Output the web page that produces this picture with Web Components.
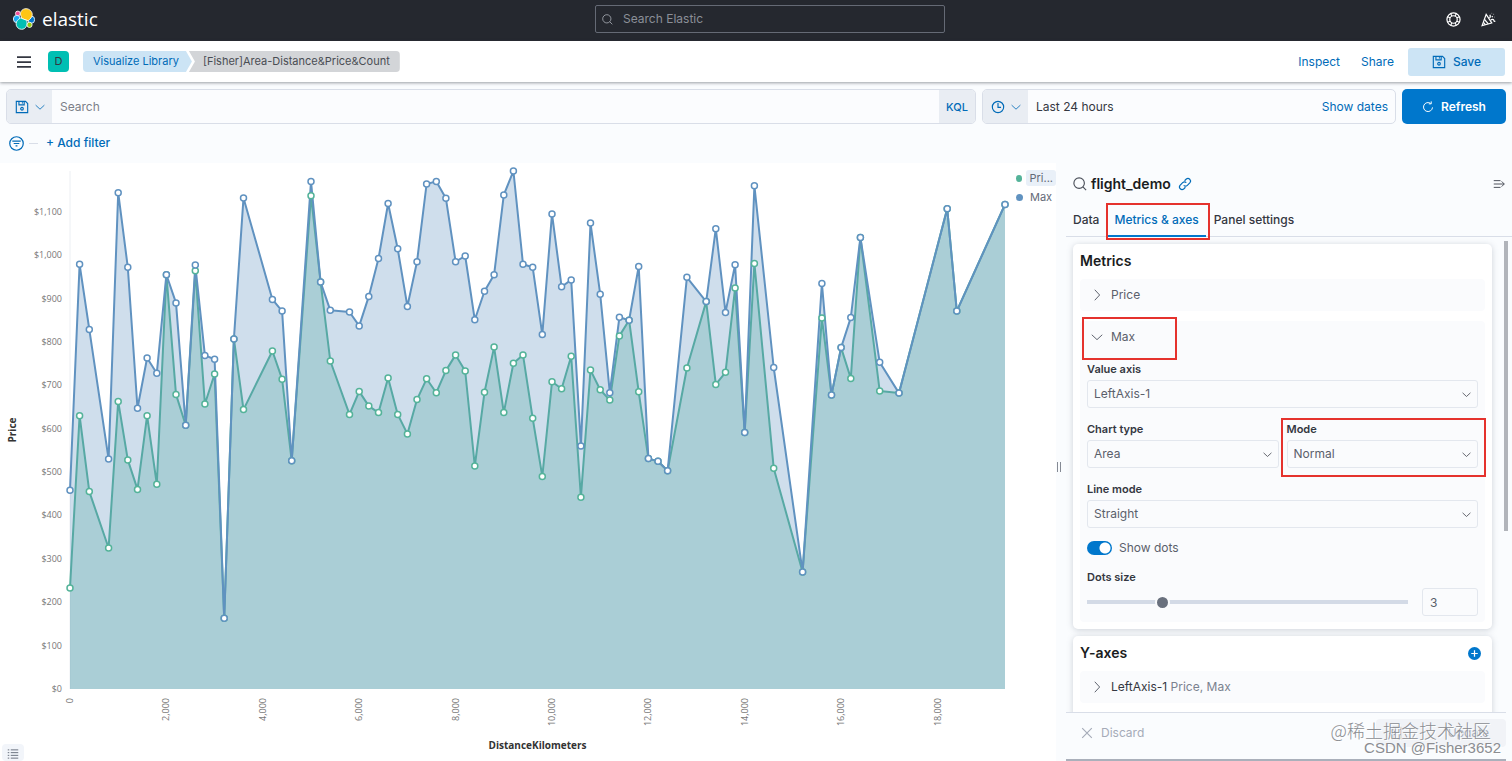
<!DOCTYPE html>
<html lang="en">
<head>
<meta charset="utf-8">
<meta name="viewport" content="width=device-width, initial-scale=1">
<title>Visualize Library - Elastic</title>
<style>
    html, body {
        height: 100%;
    }
    body {
        margin: 0;
        font-family: Inter, "Noto Sans CJK SC", sans-serif;
        font-size: 12px;
        line-height: 20px;
        color: #343741;
        --primary: #006bb8;
        --line: #d9dee8;
        --callout: #e5322d;
    }
</style>
</head>
<body>
<visualize-app></visualize-app>

<script>
const icons = {
    search: `<circle cx="7" cy="7" r="6"/><path d="M11.300 11.300l3.700 3.700"/>`,
    help: `<circle cx="8" cy="8" r="7"/><circle cx="8" cy="8" r="4"/><path d="M5 1.700l1.200 2.700M11 1.700l-1.200 2.700M5 14.300l1.200-2.700M11 14.300l-1.200-2.700M1.700 5l2.700 1.200M1.700 11l2.700-1.200M14.300 5l-2.700 1.200M14.300 11l-2.700-1.200"/>`,
    cheer: `<path d="M5.500 2.500L1.200 14.500l10.300-2.800z"/><path d="M3.800 8l4 4.600M2.600 11l2 2.400"/><path d="M9 6.500c1.200-.8 1-2.300.5-3.500M10.500 8.500c1.500-1.200 3-.8 3.200.4s.8 1.300 1.600.8M11.500 5.500l1-1M13.500 2.500h.4M11.500 1.500h.3M14.500 5.500h.3"/>`,
    save: `<path d="M1.500 1.500h10.500l2.500 2.500v10.500h-13z"/><path d="M4.500 1.500v4h6v-4M8.500 2.500v1.500"/><circle cx="8" cy="10" r="1.500"/>`,
    down: `<path d="M1 5l7 6.500L15 5"/>`,
    right: `<path d="M5 1l6.500 7L5 15"/>`,
    clock: `<circle cx="8" cy="8" r="6.500"/><path d="M8 3.500v5h3.500"/>`,
    refresh: `<path d="M11.500 3.200A6 6 0 1 0 14 8.500"/><path d="M12.300.5v3.300H9"/>`,
    filter: `<circle cx="8" cy="8" r="7.200"/><path d="M3.500 5.500h9M5 8h6M7 10.500h2"/>`,
    link: `<path d="M6.500 9.500a3 3 0 0 0 4.200 0l3-3a3 3 0 0 0-4.200-4.200L7.500 4.300"/><path d="M9.500 6.500a3 3 0 0 0-4.200 0l-3 3a3 3 0 0 0 4.200 4.200l2-2"/>`,
    menuRight: `<path d="M1 3.500h9M1 8h14M1 12.500h9M11.500 4.500L15 8l-3.500 3.500"/>`,
    menu: `<path d="M0 2.500h16M0 8h16M0 13.500h16" stroke-width="2"/>`,
    list: `<path d="M1 2.500h2M5 2.500h10M1 6.200h2M5 6.200h10M1 9.800h2M5 9.800h10M1 13.500h2M5 13.500h10"/>`,
    cross: `<path d="M2.500 2.500l11 11M13.500 2.500l-11 11"/>`,
    plus: `<circle cx="8" cy="8" r="8" fill="currentColor" stroke="none"/><path d="M8 4v8M4 8h8" stroke="#fff" stroke-width="1.500"/>`,
    apply: `<path d="M5.500 1.500h9v13h-9v-4M5.500 5.500v-4M1 8h8M6.500 5.500L9 8l-2.500 2.500"/>`
};

// [distance, max, price], the distance in steps of 200 km
const flights = [
    [0, 458, 233], [1, 979, 630], [2, 829, 455], [4, 530, 325], [5, 1144, 663],
    [6, 972, 528], [7, 647, 460], [8, 763, 630], [9, 728, 472], [10, 955, 955],
    [11, 890, 679], [12, 608, 608], [13, 977, 964], [14, 769, 657], [15, 760, 726],
    [16, 163, 163], [17, 807, 807], [18, 1132, 644], [21, 898, 779], [22, 871, 714],
    [23, 526, 526], [25, 1170, 1137], [26, 938, 938], [27, 873, 756], [29, 869, 633],
    [30, 837, 686], [31, 905, 652], [32, 992, 637], [33, 1119, 717], [34, 1015, 633],
    [35, 882, 588], [36, 985, 667], [37, 1164, 715], [38, 1170, 683], [39, 1131, 734],
    [40, 985, 770], [41, 998, 733], [42, 851, 514], [43, 917, 684], [44, 955, 788],
    [45, 1139, 637], [46, 1194, 751], [47, 979, 770], [48, 972, 624], [49, 817, 490],
    [50, 1095, 708], [51, 927, 692], [52, 943, 767], [53, 560, 442], [54, 1074, 735],
    [55, 910, 690], [56, 683, 666], [57, 857, 814], [58, 850, 850], [59, 974, 685],
    [60, 531, 531], [61, 525, 525], [62, 503, 503], [64, 949, 740], [66, 893, 893],
    [67, 1061, 702], [68, 868, 730], [69, 978, 924], [70, 591, 591], [71, 1160, 981],
    [73, 741, 509], [76, 270, 270], [78, 935, 855], [79, 678, 678], [80, 787, 787],
    [81, 856, 716], [82, 1041, 1041], [84, 753, 687], [86, 682, 682], [91, 1107, 1107],
    [92, 871, 871], [97, 1117, 1117]
];

const baseStyle = `
    * {
        box-sizing: border-box;
    }
    button, input, select {
        margin: 0;
        padding: 0;
        border: 0;
        background: none;
        font: inherit;
        color: inherit;
        outline: none;
    }
    a {
        text-decoration: none;
        color: inherit;
    }
`;

class UiIcon extends HTMLElement{
    connectedCallback(){
        if (this.shadowRoot) return;
        this.attachShadow({mode: "open"}).innerHTML = `
        <style>
            :host {
                display: block;
                flex: none;
                width: 14px;
                height: 14px;
            }
            svg {
                display: block;
                width: 100%;
                height: 100%;
                overflow: visible;
            }
        </style>
        <svg viewBox="0 0 16 16" fill="none" stroke="currentColor" stroke-width="1.3" aria-hidden="true">${icons[this.getAttribute("name")]}</svg>
        `;
    }
}

class ElasticHeader extends HTMLElement{
    constructor(){
        super();
        this.attachShadow({mode: "open"}).innerHTML = `
        <style>
            ${baseStyle}
            :host {
                display: grid;
                grid-template-columns: 582fr 350px 551fr;
                align-items: center;
                box-sizing: border-box;
                height: 41px;
                padding: 0 16px 3px 13px;
                background: #25282f;
                color: #fff;
            }
            .brand {
                display: flex;
                align-items: center;
                gap: 7px;
                font: 19px/24px "Open Sans", sans-serif;
            }
            .brand svg {
                width: 22px;
                height: 22px;
            }
            .search {
                display: flex;
                align-items: center;
                gap: 10px;
                height: 28px;
                padding: 0 6px;
                border: 1px solid #656a75;
                border-radius: 2px;
                color: #a0a4ac;
            }
            .search ui-icon {
                width: 11px;
                height: 11px;
            }
            .search input {
                flex: 1;
            }
            input::placeholder {
                color: #8b8f98;
                opacity: 1;
            }
            .tools {
                display: flex;
                justify-content: flex-end;
                gap: 20px;
            }
            .tools ui-icon {
                width: 15px;
                height: 15px;
            }
        </style>
        <a class="brand" href="#">
            <svg viewBox="0 0 32 32" stroke="#fff" stroke-width="1.2" aria-hidden="true">
                <circle cx="7" cy="8" r="3.500" fill="#f04e98"/>
                <ellipse cx="5.500" cy="16" rx="5" ry="5.300" fill="#1ba9f5"/>
                <ellipse cx="26.500" cy="17" rx="5" ry="5.300" fill="#07c"/>
                <circle cx="24" cy="24.500" r="3.800" fill="#93c90e"/>
                <path d="M11 10c-1-5 3-9 8-9s9 4 9 8.500c0 4-3 6.500-6 9l-9-3z" fill="#fec514"/>
                <path d="M11 14.500l9 3.500c1.500 7-1.500 13-7.500 13-5 0-8-4-8-8s3-6.500 6.500-8.500z" fill="#00bfb3"/>
            </svg>
            <span>elastic</span>
        </a>
        <label class="search">
            <ui-icon name="search"></ui-icon>
            <input type="search" placeholder="Search Elastic" aria-label="Search Elastic">
        </label>
        <div class="tools">
            <button aria-label="Help"><ui-icon name="help"></ui-icon></button>
            <button aria-label="News"><ui-icon name="cheer"></ui-icon></button>
        </div>
        `;
    }
}

class AppToolbar extends HTMLElement{
    constructor(){
        super();
        this.attachShadow({mode: "open"}).innerHTML = `
        <style>
            ${baseStyle}
            :host {
                display: flex;
                align-items: center;
                height: 41px;
                padding: 0 7px 0 17px;
                background: #fff;
                box-shadow: 0 1px 3px rgba(60, 65, 75, 0.5);
                z-index: 1;
            }
            .space {
                margin: 0 14px 0 17px;
                width: 21px;
                border-radius: 4px;
                background: #00bfb3;
                font-size: 11px;
                line-height: 21px;
                text-align: center;
            }
            nav {
                display: flex;
                font-size: 11px;
                line-height: 21px;
            }
            nav a {
                padding: 0 13px 0 10px;
                border-radius: 4px 0 0 4px;
                background: #cce4f5;
                color: var(--primary);
                clip-path: polygon(0 0, calc(100% - 6px) 0, 100% 50%, calc(100% - 6px) 100%, 0 100%);
            }
            nav span {
                margin-left: -3px;
                padding: 0 10px 0 14px;
                border-radius: 0 4px 4px 0;
                background: #d3d5d8;
                color: #4a4d54;
                clip-path: polygon(0 0, 100% 0, 100% 100%, 0 100%, 6px 50%);
            }
            .actions {
                display: flex;
                align-items: center;
                gap: 21px;
                margin-left: auto;
                color: var(--primary);
            }
            .save {
                display: flex;
                align-items: center;
                gap: 7px;
                margin-left: -7px;
                height: 28px;
                padding: 0 24px;
                border-radius: 3px;
                background: #cce4f5;
                font-weight: 500;
            }
        </style>
        <button aria-label="Menu"><ui-icon name="menu"></ui-icon></button>
        <button class="space">D</button>
        <nav>
            <a href="#">Visualize Library</a>
            <span>[Fisher]Area-Distance&amp;Price&amp;Count</span>
        </nav>
        <div class="actions">
            <button>Inspect</button>
            <button>Share</button>
            <button class="save"><ui-icon name="save"></ui-icon>Save</button>
        </div>
        `;
    }
}

class QueryBar extends HTMLElement{
    constructor(){
        super();
        this.attachShadow({mode: "open"}).innerHTML = `
        <style>
            ${baseStyle}
            :host {
                display: block;
                padding: 7px 6px 10px;
            }
            .row {
                display: grid;
                grid-template-columns: 970fr 414fr 104px;
                gap: 6px;
            }
            .box {
                display: flex;
                align-items: stretch;
                height: 35px;
                border: 1px solid var(--line);
                border-radius: 5px;
                background: #fbfcfe;
                overflow: hidden;
            }
            .addon {
                display: flex;
                align-items: center;
                justify-content: center;
                gap: 6px;
                width: 45px;
                background: #e9edf3;
                color: var(--primary);
            }
            .addon .chevron {
                width: 10px;
                height: 10px;
            }
            .kql {
                width: 36px;
                font-size: 11px;
                font-weight: 500;
            }
            input {
                flex: 1;
                padding: 0 8px;
            }
            input::placeholder {
                color: #7b7f88;
                opacity: 1;
            }
            .range {
                flex: 1;
                padding: 0 8px;
                text-align: left;
            }
            .dates {
                padding: 0 7px;
                color: var(--primary);
            }
            .refresh {
                display: flex;
                align-items: center;
                justify-content: center;
                gap: 7px;
                border-radius: 5px;
                background: #07c;
                color: #fff;
                font-weight: 600;
            }
            .refresh ui-icon {
                width: 12px;
                height: 12px;
            }
            .filters {
                display: flex;
                align-items: center;
                gap: 8px;
                padding: 9px 3px 0;
                color: var(--primary);
            }
            .filters ui-icon {
                width: 15px;
                height: 15px;
            }
            .filters hr {
                width: 9px;
                margin: 0 0 0 -3px;
                border: 0;
                border-top: 1px solid var(--line);
            }
            .filters > button:last-child {
                font-weight: 500;
            }
        </style>
        <div class="row">
            <div class="box">
                <button class="addon" aria-label="Saved queries"><ui-icon name="save"></ui-icon><ui-icon class="chevron" name="down"></ui-icon></button>
                <input type="search" placeholder="Search" aria-label="Search">
                <button class="addon kql">KQL</button>
            </div>
            <div class="box">
                <button class="addon" aria-label="Quick select"><ui-icon name="clock"></ui-icon><ui-icon class="chevron" name="down"></ui-icon></button>
                <button class="range">Last 24 hours</button>
                <button class="dates">Show dates</button>
            </div>
            <button class="refresh"><ui-icon name="refresh"></ui-icon>Refresh</button>
        </div>
        <div class="filters">
            <button aria-label="Filter options"><ui-icon name="filter"></ui-icon></button>
            <hr>
            <button>+ Add filter</button>
        </div>
        `;
    }
}

class AreaChart extends HTMLElement{
    constructor(){
        super();
        this.attachShadow({mode: "open"}).innerHTML = `
        <style>
            ${baseStyle}
            :host {
                display: flex;
                position: relative;
                min-width: 0;
                background: #fff;
            }
            .plot {
                flex: 1;
                min-width: 0;
                overflow: hidden;
            }
            svg {
                display: block;
            }
            text {
                font-family: "Open Sans", "Noto Sans", sans-serif;
                font-size: 9px;
                fill: #777;
            }
            .title {
                font-size: 10px;
                font-weight: 700;
                fill: #333;
            }
            .legend {
                display: flex;
                flex-direction: column;
                gap: 3px;
                width: 40px;
                padding-top: 7px;
                font-size: 11px;
                line-height: 16px;
                color: #646a77;
            }
            .legend button {
                display: flex;
                align-items: center;
                gap: 4px;
            }
            .legend i {
                width: 7px;
                height: 7px;
                border-radius: 50%;
                background: #6092c0;
            }
            .legend .price i {
                background: #54b399;
            }
            .legend span {
                padding: 0 3px;
                border-radius: 3px;
            }
            .legend .price span {
                background: #e9f0f8;
            }
            .toggle {
                position: absolute;
                left: 2px;
                bottom: 0;
                padding: 4px 5px 1px;
                border-radius: 4px;
                background: #f2f5fa;
                color: #69707d;
            }
            .toggle ui-icon {
                width: 12px;
                height: 12px;
            }
        </style>
        <div class="plot"></div>
        <div class="legend">
            <button class="price"><i></i><span>Pri...</span></button>
            <button><i></i><span>Max</span></button>
        </div>
        <button class="toggle" aria-label="Toggle legend"><ui-icon name="list"></ui-icon></button>
        `;
        this.plot = this.shadowRoot.querySelector(".plot");
    }

    connectedCallback(){
        this.observer = new ResizeObserver(() => this.draw());
        this.observer.observe(this.plot);
        this.draw();
    }

    disconnectedCallback(){
        this.observer.disconnect();
    }

    draw(){
        const width = this.plot.clientWidth;
        const height = this.clientHeight;
        if (width < 120 || height < 120) return;
        const left = 70, right = width - 11, top = 8, bottom = height - 72;
        const x = step => left + step / 97 * (right - left);
        const y = value => bottom - value / 1194 * (bottom - top);

        const series = (column, color) => {
            const line = flights.map(row => `${x(row[0]).toFixed(1)},${y(row[column]).toFixed(1)}`).join(" ");
            return `<polygon points="${left},${bottom} ${line} ${right},${bottom}" fill="${color}" fill-opacity="0.3"/>
                <polyline points="${line}" fill="none" stroke="${color}" stroke-width="2" stroke-linejoin="round"/>`;
        };
        const dots = (column, color) => flights.map(row =>
            `<circle cx="${x(row[0]).toFixed(1)}" cy="${y(row[column]).toFixed(1)}" r="3" fill="#fff" stroke="${color}" stroke-width="1.5"/>`
        ).join("");

        let labels = "";
        for (let price = 0; price <= 1100; price += 100) {
            labels += `<text x="${left - 8}" y="${y(price) + 3}" text-anchor="end">$${price.toLocaleString("en-US")}</text>`;
        }
        for (let km = 0; km <= 18000; km += 2000) {
            labels += `<text transform="translate(${x(km / 200) + 3} ${bottom + 9}) rotate(-90)" text-anchor="end">${km.toLocaleString("en-US")}</text>`;
        }

        this.plot.innerHTML = `
        <svg width="${width}" height="${height}" role="img" aria-label="Price by DistanceKilometers">
            <path d="M${left} ${top}V${bottom}" stroke="#eceff3"/>
            ${series(2, "#54b399")}
            ${series(1, "#6092c0")}
            ${dots(2, "#54b399")}
            ${dots(1, "#6092c0")}
            ${labels}
            <text class="title" transform="translate(16 ${(top + bottom) / 2}) rotate(-90)" text-anchor="middle">Price</text>
            <text class="title" x="${(left + right) / 2}" y="${height - 12}" text-anchor="middle">DistanceKilometers</text>
        </svg>
        `;
    }
}

class SelectField extends HTMLElement{
    connectedCallback(){
        if (this.shadowRoot) return;
        this.attachShadow({mode: "open"}).innerHTML = `
        <style>
            ${baseStyle}
            :host {
                display: flex;
                flex-direction: column;
                gap: 2px;
                position: relative;
                min-width: 0;
            }
            label {
                font-size: 11px;
                font-weight: 600;
                line-height: 18px;
            }
            .control {
                display: grid;
                align-items: center;
            }
            select, ui-icon {
                grid-area: 1 / 1;
            }
            select {
                appearance: none;
                height: 28px;
                padding: 0 24px 0 6px;
                border: 1px solid #e3e7ee;
                border-radius: 3px;
                color: #5a606b;
            }
            ui-icon {
                justify-self: end;
                margin-right: 7px;
                width: 9px;
                height: 9px;
                pointer-events: none;
            }
            :host([marked])::after {
                content: "";
                position: absolute;
                inset: -2px -8px -9px -6px;
                border: 2px solid var(--callout);
                pointer-events: none;
            }
        </style>
        <label for="value">${this.getAttribute("label")}</label>
        <div class="control">
            <select id="value"><option>${this.getAttribute("value")}</option></select>
            <ui-icon name="down"></ui-icon>
        </div>
        `;
    }
}

class OptionCard extends HTMLElement{
    constructor(){
        super();
        this.attachShadow({mode: "open"}).innerHTML = `
        <style>
            :host {
                display: block;
                padding: 7px;
                border-radius: 5px;
                background: #fff;
                box-shadow: 0 1px 6px rgba(90, 100, 120, 0.28);
            }
            header {
                display: flex;
                align-items: center;
                justify-content: space-between;
                margin-bottom: 8px;
                padding-right: 4px;
            }
            h2 {
                margin: 0;
                font-size: 14px;
                font-weight: 600;
                line-height: 20px;
                color: #1a1c21;
            }
            .items {
                display: flex;
                flex-direction: column;
                gap: 10px;
            }
        </style>
        <header><h2><slot name="title"></slot></h2><slot name="action"></slot></header>
        <div class="items"><slot></slot></div>
        `;
    }
}

class AccordionItem extends HTMLElement{
    connectedCallback(){
        if (this.shadowRoot) return;
        const open = this.hasAttribute("open");
        this.attachShadow({mode: "open"}).innerHTML = `
        <style>
            ${baseStyle}
            :host {
                display: block;
                border-radius: 4px;
                background: #fafbfd;
            }
            button {
                display: flex;
                align-items: center;
                gap: 8px;
                position: relative;
                height: 32px;
                padding: 0 11px;
                color: #5a606b;
            }
            ui-icon {
                width: 12px;
                height: 12px;
            }
            .body {
                padding: 7px 7px 6px;
            }
            :host([marked]) button {
                width: 97px;
            }
            :host([marked]) button::after {
                content: "";
                position: absolute;
                inset: -4px 0 -7px 2px;
                border: 2px solid var(--callout);
            }
        </style>
        <button aria-expanded="${open}"><ui-icon name="${open ? "down" : "right"}"></ui-icon><span><slot name="title"></slot></span></button>
        ${open ? `<div class="body"><slot></slot></div>` : ""}
        `;
    }
}

class SidePanel extends HTMLElement{
    constructor(){
        super();
        this.attachShadow({mode: "open"}).innerHTML = `
        <style>
            ${baseStyle}
            :host {
                display: flex;
                flex-direction: column;
                position: relative;
                min-height: 0;
                background: #fafcfe;
            }
            .source {
                display: flex;
                align-items: center;
                gap: 4px;
                padding: 10px 7px 0;
                height: 31px;
                color: #4a4f59;
            }
            .source .link {
                margin-left: 3px;
                color: var(--primary);
            }
            .source button:last-child {
                margin-left: auto;
            }
            .source button:last-child ui-icon {
                width: 12px;
                height: 12px;
            }
            h1 {
                margin: 0;
                font-size: 14px;
                font-weight: 600;
                color: #1a1c21;
            }
            .tabs {
                display: flex;
                gap: 15px;
                margin-top: 9px;
                padding-left: 7px;
                border-bottom: 1px solid var(--line);
                font-weight: 500;
            }
            .tabs button {
                position: relative;
                height: 33px;
            }
            .tabs .active {
                color: var(--primary);
            }
            .tabs .active::before {
                content: "";
                position: absolute;
                inset: auto -7px -1px -6px;
                height: 2px;
                background: #07c;
            }
            .tabs .active::after {
                content: "";
                position: absolute;
                inset: 0 -11px -4px -8px;
                border: 2px solid var(--callout);
            }
            .content {
                flex: 1;
                display: flex;
                flex-direction: column;
                gap: 7px;
                position: relative;
                min-height: 0;
                padding: 7px 20px 0 7px;
                overflow: hidden;
            }
            .content > * {
                flex: none;
            }
            .thumb {
                position: absolute;
                top: 4px;
                right: 4px;
                width: 4px;
                height: 61%;
                background: #b1b4ba;
            }
            .fields {
                display: flex;
                flex-direction: column;
                gap: 12px;
            }
            .pair {
                display: grid;
                grid-template-columns: 1fr 1fr;
                gap: 8px;
            }
            .switch {
                display: flex;
                align-items: center;
                gap: 7px;
                line-height: 16px;
                color: #5a606b;
            }
            .switch input {
                appearance: none;
                width: 25px;
                height: 14px;
                border-radius: 7px;
                background: radial-gradient(circle at 18px 7px, #fff 5px, #07c 6px);
            }
            .size label {
                display: block;
                margin-bottom: 2px;
                font-size: 11px;
                font-weight: 600;
                line-height: 18px;
            }
            .slider {
                display: flex;
                align-items: center;
                gap: 14px;
            }
            .slider input[type=range] {
                appearance: none;
                flex: 1;
                min-width: 0;
                height: 14px;
                background: linear-gradient(#d3dae6, #d3dae6) center / 100% 4px no-repeat;
            }
            .slider input[type=range]::-webkit-slider-thumb {
                appearance: none;
                width: 15px;
                height: 15px;
                border: 2px solid #fafbfd;
                border-radius: 50%;
                background: #69707d;
            }
            .slider input[type=number] {
                appearance: textfield;
                width: 56px;
                height: 28px;
                padding: 0 7px;
                border: 1px solid #e3e7ee;
                border-radius: 3px;
                color: #5a606b;
            }
            .add {
                color: #07c;
            }
            .add ui-icon {
                width: 13px;
                height: 13px;
            }
            small {
                font-size: 12px;
                color: #7b828f;
            }
            strong {
                font-weight: 400;
                color: #343741;
            }
            footer {
                display: flex;
                align-items: center;
                justify-content: space-between;
                position: relative;
                height: 49px;
                margin-right: 6px;
                padding: 0 0 6px 14px;
                border-top: 1px solid var(--line);
                border-bottom: 2px solid #aab0bb;
                background: #fafcfe;
                color: #a5abb8;
            }
            footer button {
                display: flex;
                align-items: center;
                gap: 7px;
            }
            footer .update {
                justify-content: space-between;
                width: 130px;
                height: 28px;
                padding: 0 17px 0 12px;
                border-radius: 4px;
                background: #f1f3f7;
            }
        </style>
        <div class="source">
            <ui-icon name="search"></ui-icon>
            <h1>flight_demo</h1>
            <button class="link" aria-label="Linked to saved search"><ui-icon name="link"></ui-icon></button>
            <button aria-label="Collapse"><ui-icon name="menuRight"></ui-icon></button>
        </div>
        <div class="tabs">
            <button>Data</button>
            <button class="active">Metrics &amp; axes</button>
            <button>Panel settings</button>
        </div>
        <div class="content">
            <option-card>
                <span slot="title">Metrics</span>
                <accordion-item><span slot="title">Price</span></accordion-item>
                <accordion-item open marked>
                    <span slot="title">Max</span>
                    <div class="fields">
                        <select-field label="Value axis" value="LeftAxis-1"></select-field>
                        <div class="pair">
                            <select-field label="Chart type" value="Area"></select-field>
                            <select-field label="Mode" value="Normal" marked></select-field>
                        </div>
                        <select-field label="Line mode" value="Straight"></select-field>
                        <label class="switch"><input type="checkbox" role="switch" checked>Show dots</label>
                        <div class="size">
                            <label for="dots">Dots size</label>
                            <div class="slider">
                                <input id="dots" type="range" min="1" max="10" value="3">
                                <input type="number" value="3" aria-label="Dots size value">
                            </div>
                        </div>
                    </div>
                </accordion-item>
            </option-card>
            <option-card>
                <span slot="title">Y-axes</span>
                <button class="add" slot="action" aria-label="Add Y-axis"><ui-icon name="plus"></ui-icon></button>
                <accordion-item><span slot="title"><strong>LeftAxis-1</strong> <small>Price, Max</small></span></accordion-item>
                <accordion-item></accordion-item>
            </option-card>
            <div class="thumb"></div>
        </div>
        <footer>
            <button><ui-icon name="cross"></ui-icon>Discard</button>
            <button class="update"><ui-icon name="apply"></ui-icon>Update</button>
        </footer>
        `;
    }
}

class WaterMark extends HTMLElement{
    constructor(){
        super();
        this.attachShadow({mode: "open"}).innerHTML = `
        <style>
            :host {
                display: block;
                position: absolute;
                right: 11px;
                bottom: 4px;
                text-align: right;
                color: #8b8d92;
                text-shadow: 1px 1px 0 #fff;
                pointer-events: none;
            }
            p {
                margin: 0;
                font: 15px/18px "Liberation Sans", sans-serif;
            }
            .site {
                padding-right: 10px;
                font: 300 18px/18px "Noto Sans CJK SC", sans-serif;
            }
        </style>
        <p class="site">@稀土掘金技术社区</p>
        <p>CSDN @Fisher3652</p>
        `;
    }
}

class VisualizeApp extends HTMLElement{
    constructor(){
        super();
        this.attachShadow({mode: "open"}).innerHTML = `
        <style>
            :host {
                display: flex;
                flex-direction: column;
                position: relative;
                height: 100%;
                overflow: hidden;
                background: #fafcfe;
            }
            elastic-header, app-toolbar, query-bar {
                flex: none;
            }
            main {
                flex: 1;
                display: grid;
                grid-template-columns: minmax(0, 1fr) 10px 446px;
                min-height: 0;
            }
            .resizer {
                display: flex;
                align-items: center;
                justify-content: center;
                padding: 10px 5px 0 0;
            }
            .resizer::before {
                content: "";
                width: 2px;
                height: 10px;
                border: solid #858a94;
                border-width: 0 1px;
            }
        </style>
        <elastic-header></elastic-header>
        <app-toolbar></app-toolbar>
        <query-bar></query-bar>
        <main>
            <area-chart></area-chart>
            <div class="resizer"></div>
            <side-panel></side-panel>
        </main>
        <water-mark></water-mark>
        `;
    }
}

customElements.define("ui-icon", UiIcon);
customElements.define("elastic-header", ElasticHeader);
customElements.define("app-toolbar", AppToolbar);
customElements.define("query-bar", QueryBar);
customElements.define("area-chart", AreaChart);
customElements.define("select-field", SelectField);
customElements.define("option-card", OptionCard);
customElements.define("accordion-item", AccordionItem);
customElements.define("side-panel", SidePanel);
customElements.define("water-mark", WaterMark);
customElements.define("visualize-app", VisualizeApp);
</script>
</body>
</html>
